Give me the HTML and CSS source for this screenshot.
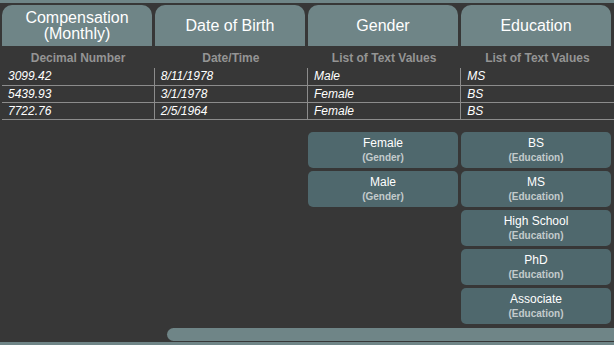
FILE: index.html
```html
<!DOCTYPE html>
<html lang="en">
<head>
  <meta charset="UTF-8">
  <meta name="viewport" content="width=device-width, initial-scale=1.0">
  <title>Data Grid</title>
  <link rel="stylesheet" href="styles.css">
</head>
<body>
  <div class="topbar"></div>

  <main class="main">
    <div class="heads">
      <div class="head">Compensation<br>(Monthly)</div>
      <div class="head">Date of Birth</div>
      <div class="head">Gender</div>
      <div class="head">Education</div>
    </div>

    <table class="data">
      <tr class="data__types">
        <th>Decimal Number</th>
        <th>Date/Time</th>
        <th>List of Text Values</th>
        <th>List of Text Values</th>
      </tr>
      <tr>
        <td>3099.42</td>
        <td>8/11/1978</td>
        <td>Male</td>
        <td>MS</td>
      </tr>
      <tr>
        <td>5439.93</td>
        <td>3/1/1978</td>
        <td>Female</td>
        <td>BS</td>
      </tr>
      <tr>
        <td>7722.76</td>
        <td>2/5/1964</td>
        <td>Female</td>
        <td>BS</td>
      </tr>
    </table>

    <div class="values">
      <div class="values__col"></div>
      <div class="values__col"></div>
      <div class="values__col">
        <div class="chip"><span class="chip__name">Female</span><span class="chip__field">(Gender)</span></div>
        <div class="chip"><span class="chip__name">Male</span><span class="chip__field">(Gender)</span></div>
      </div>
      <div class="values__col">
        <div class="chip"><span class="chip__name">BS</span><span class="chip__field">(Education)</span></div>
        <div class="chip"><span class="chip__name">MS</span><span class="chip__field">(Education)</span></div>
        <div class="chip"><span class="chip__name">High School</span><span class="chip__field">(Education)</span></div>
        <div class="chip"><span class="chip__name">PhD</span><span class="chip__field">(Education)</span></div>
        <div class="chip"><span class="chip__name">Associate</span><span class="chip__field">(Education)</span></div>
      </div>
    </div>

    <div class="scroll">
      <div class="scroll__thumb"></div>
    </div>
  </main>

  <div class="bottombar"></div>
</body>
</html>
```

FILE: styles.css
```css
*, *:after, *:before {
  box-sizing: border-box;
}

html, body {
  margin: 0;
  height: 100%;
  background-color: #373737;
  font-family: "Liberation Sans", Arial, sans-serif;
  overflow: hidden;
}

.topbar {
  height: 3px;
  background-color: #6f8587;
}

.main {
  padding: 2px 0 0 2px;
}

.heads {
  display: grid;
  grid-template-columns: repeat(4, 150px);
  column-gap: 3px;
}

.head {
  height: 41px;
  display: flex;
  align-items: center;
  justify-content: center;
  text-align: center;
  background-color: #6f8587;
  border-radius: 10px 10px 0 0;
  color: #fff;
  font-size: 16px;
  line-height: 16px;
}

.data {
  width: 612px;
  table-layout: fixed;
  border-collapse: collapse;
  color: #fff;
  font-size: 12px;
}

.data th, .data td {
  width: 153px;
  padding: 0 0 0 6px;
  text-align: left;
}

.data th:first-child, .data td:first-child {
  width: 152px;
}

.data__types th {
  height: 22px;
  padding: 1px 0 0;
  text-align: center;
  color: #949494;
  font-weight: bold;
}

.data td {
  height: 17px;
  font-style: italic;
  line-height: 14px;
  border-bottom: 1px solid #8c8c8c;
}

.data td + td {
  border-left: 1px solid #8c8c8c;
}

.values {
  display: grid;
  grid-template-columns: repeat(4, 150px);
  column-gap: 3px;
  margin-top: 12px;
}

.values__col {
  display: flex;
  flex-direction: column;
  gap: 3px;
}

.chip {
  height: 36px;
  display: flex;
  flex-direction: column;
  align-items: center;
  justify-content: center;
  background-color: #4f686d;
  border-radius: 5px;
}

.chip__name {
  color: #fff;
  font-size: 12px;
  line-height: 14px;
}

.chip__field {
  margin-top: 2px;
  color: #c3cbcc;
  font-size: 10px;
  font-weight: bold;
  line-height: 11px;
}

.scroll {
  margin-top: 4px;
  height: 13px;
  padding-left: 165px;
}

.scroll__thumb {
  height: 13px;
  background-color: #6f8587;
  border-radius: 7px 0 0 7px;
}

.bottombar {
  position: fixed;
  left: 0;
  right: 0;
  bottom: 0;
  height: 3px;
  background-color: #6f8587;
}
```
